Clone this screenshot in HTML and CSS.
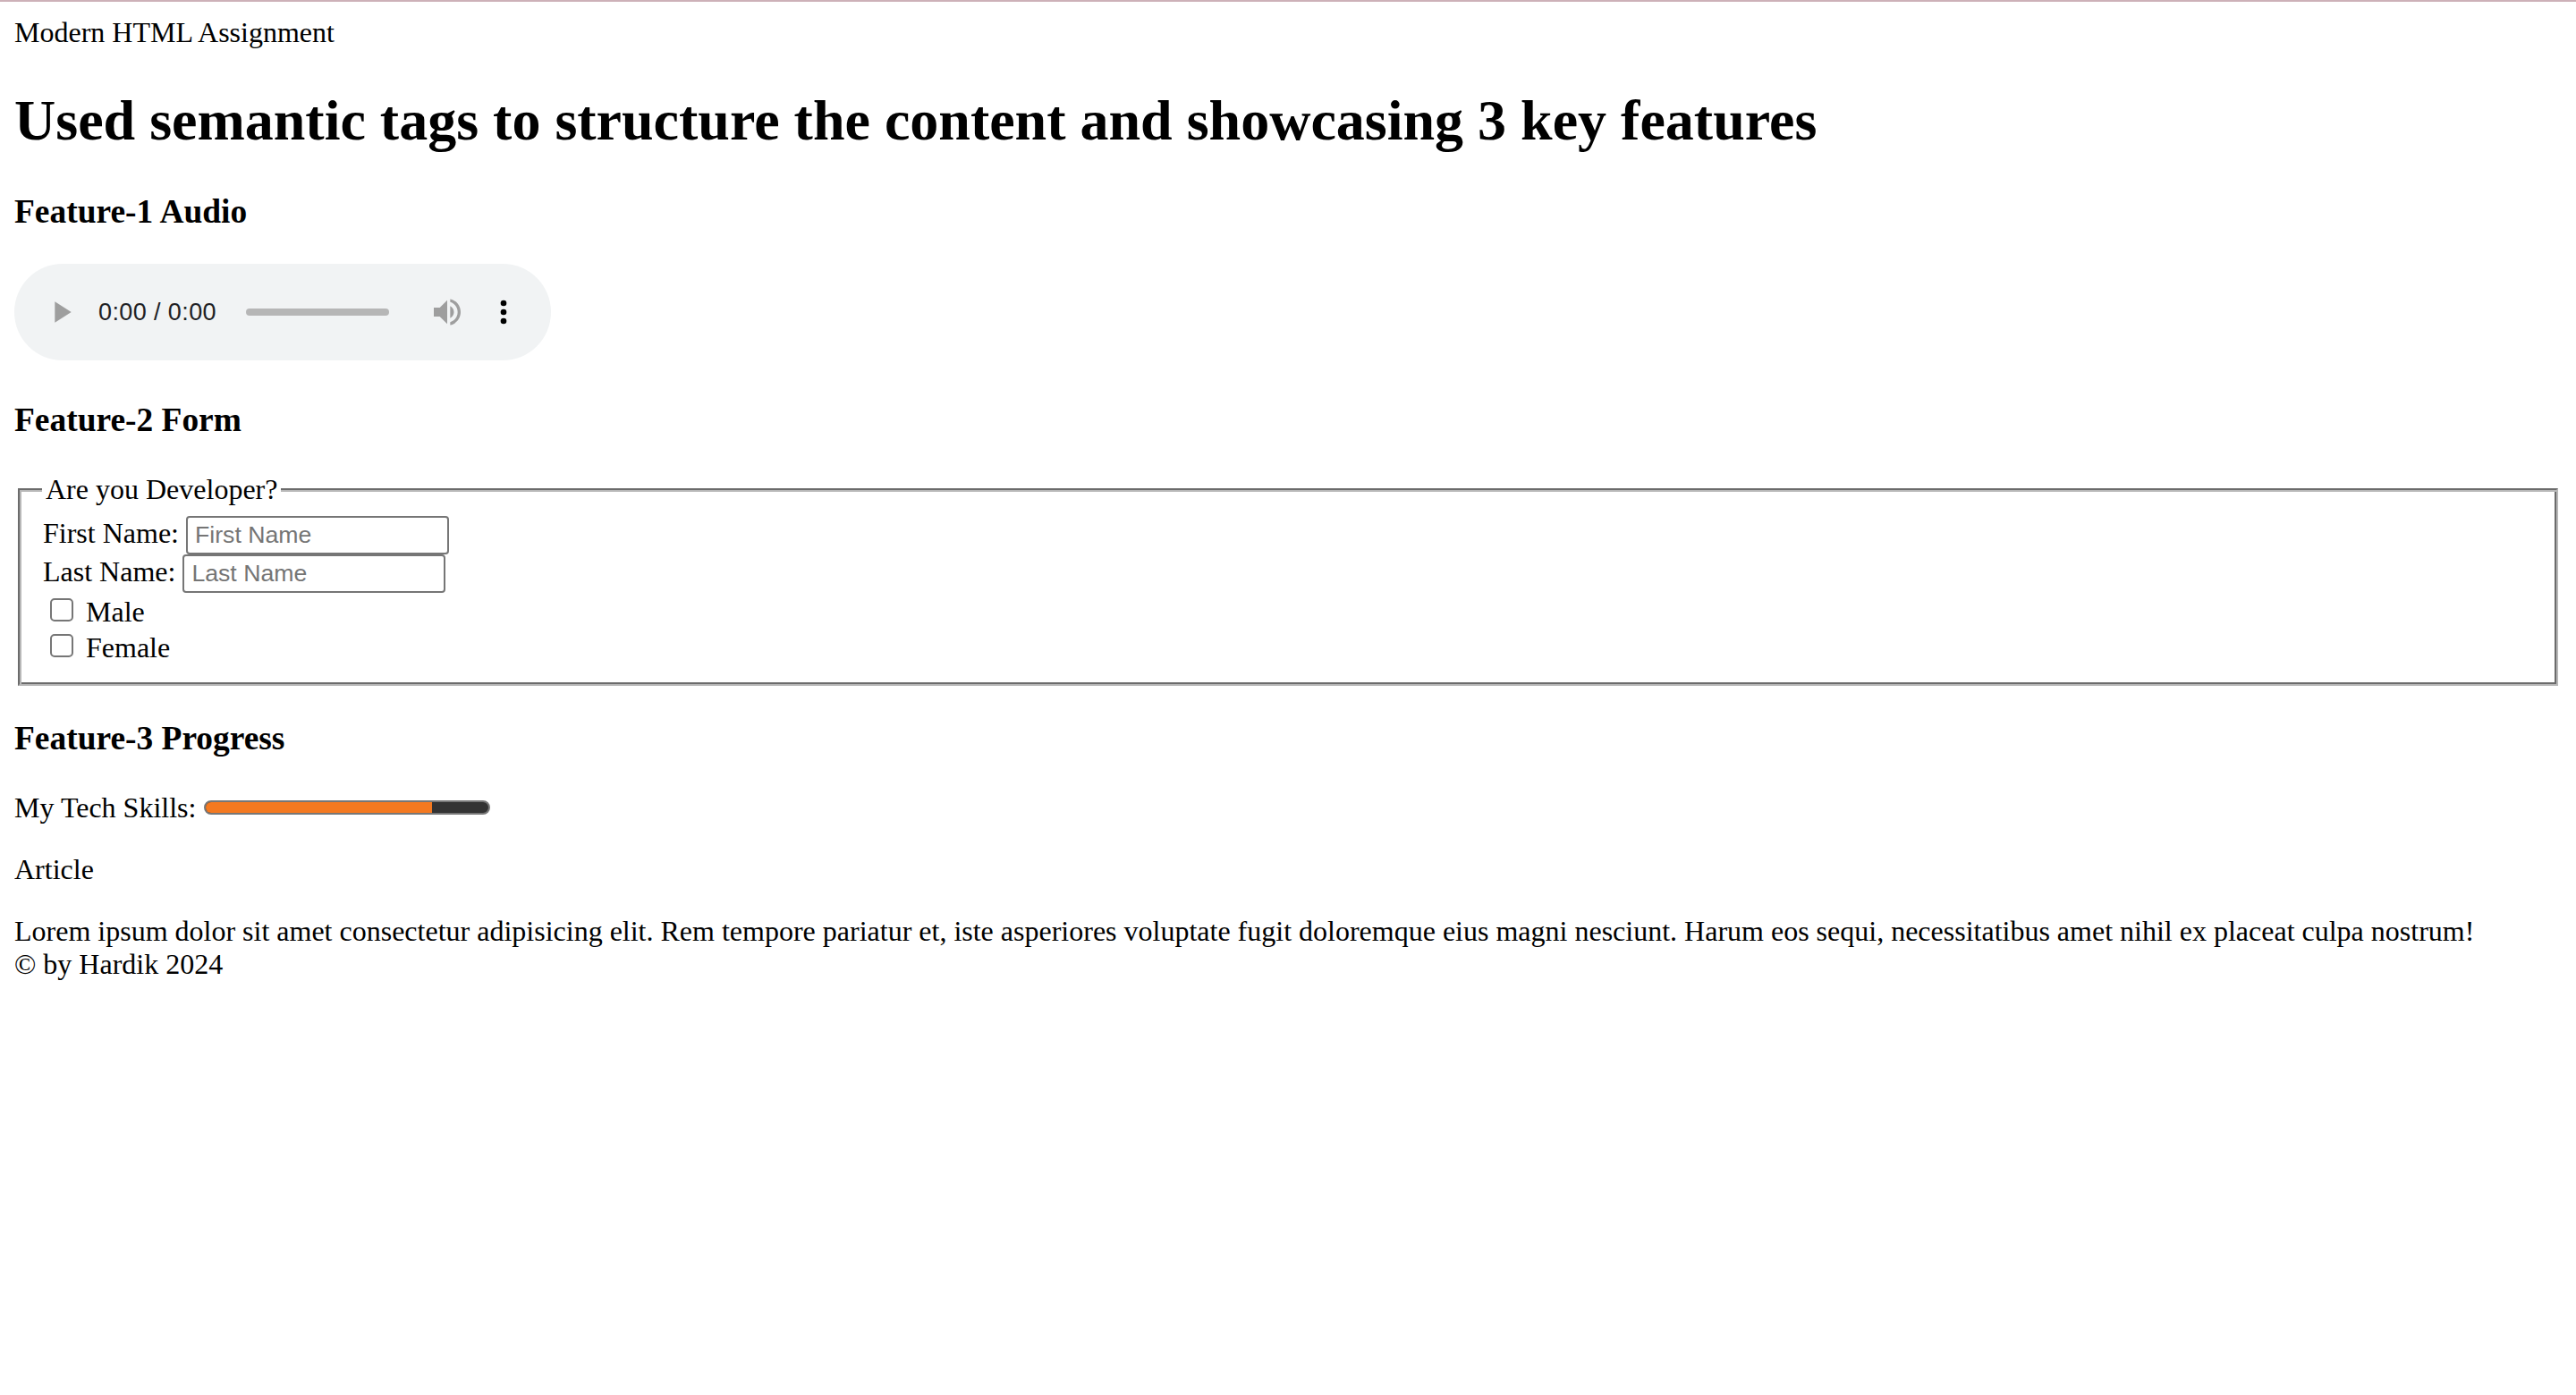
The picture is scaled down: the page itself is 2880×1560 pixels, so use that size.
FILE: index.html
```html
<!DOCTYPE html>
<html lang="en">
<head>
<meta charset="utf-8">
<title>Modern HTML Assignment</title>
<link rel="stylesheet" href="styles.css">
</head>
<body>
<header class="site-header">
  <div class="brand">Modern HTML Assignment</div>
</header>
<main>
  <h1 class="title">Used semantic tags to structure the content and showcasing 3 key features</h1>

  <section class="feature">
    <h3 class="feature-title">Feature-1 Audio</h3>
    <div class="player-line">
      <div class="player">
        <svg class="icon play" viewBox="0 0 24 24" width="40" height="40"><path d="M8 5v14l11-7z"/></svg>
        <span class="time">0:00 / 0:00</span>
        <span class="timeline"></span>
        <svg class="icon volume" viewBox="0 0 24 24" width="40" height="40"><path d="M3 9v6h4l5 5V4L7 9H3zm13.5 3c0-1.770-1.020-3.290-2.500-4.030v8.050c1.480-.730 2.500-2.250 2.500-4.020zM14 3.230v2.060c2.890.860 5 3.540 5 6.710s-2.110 5.850-5 6.710v2.060c4.010-.910 7-4.490 7-8.770s-2.990-7.860-7-8.770z"/></svg>
        <svg class="icon more" viewBox="0 0 24 24" width="40" height="40"><circle cx="12" cy="6" r="2"/><circle cx="12" cy="12" r="2"/><circle cx="12" cy="18" r="2"/></svg>
      </div>
    </div>
  </section>

  <section class="feature">
    <h3 class="feature-title">Feature-2 Form</h3>
    <form class="dev-form">
      <fieldset class="dev-fieldset">
        <legend class="dev-legend">Are you Developer?</legend>
        <div class="field-row"><label for="fname">First Name:</label> <input class="text-input" type="text" id="fname" placeholder="First Name"></div>
        <div class="field-row"><label for="lname">Last Name:</label> <input class="text-input" type="text" id="lname" placeholder="Last Name"></div>
        <div class="check-row"><input class="check" type="checkbox" id="male"><label class="check-label" for="male">Male</label></div>
        <div class="check-row"><input class="check" type="checkbox" id="female"><label class="check-label" for="female">Female</label></div>
      </fieldset>
    </form>
  </section>

  <section class="feature">
    <h3 class="feature-title">Feature-3 Progress</h3>
    <p class="skills"><label>My Tech Skills:</label><span class="progress"><span class="progress-fill" style="width:80%"></span></span></p>
  </section>

  <article class="article">
    <p class="article-title">Article</p>
    <div class="article-body">Lorem ipsum dolor sit amet consectetur adipisicing elit. Rem tempore pariatur et, iste asperiores voluptate fugit doloremque eius magni nesciunt. Harum eos sequi, necessitatibus amet nihil ex placeat culpa nostrum!</div>
  </article>
</main>
<footer class="site-footer">© by Hardik 2024</footer>
</body>
</html>
```

FILE: styles.css
```css
html {
  border-top: 2px solid #cdb1b8;
  background: #fff;
}

body {
  margin: 16px;
  font-family: "Liberation Serif", "Times New Roman", serif;
  font-size: 32px;
  color: #000;
}

.title {
  font-size: 64px;
  font-weight: bold;
  margin: 42.88px 0;
}

.feature-title {
  font-size: 37.44px;
  font-weight: bold;
  margin: 37.44px 0;
}

/* audio player */
.player-line {
  padding-bottom: 7.6px;
}

.player {
  display: flex;
  align-items: center;
  width: 600px;
  height: 108px;
  border-radius: 54px;
  background: #f1f3f4;
}

.icon {
  flex: none;
  display: block;
}

.play {
  fill: #9e9e9e;
  margin-left: 32px;
}

.time {
  flex: none;
  width: 132px;
  margin-left: 22px;
  font-family: "Liberation Sans", Arial, sans-serif;
  font-size: 27px;
  letter-spacing: 0.4px;
  color: #202124;
  white-space: nowrap;
}

.timeline {
  flex: none;
  width: 160px;
  height: 8px;
  margin-left: 33px;
  border-radius: 4px;
  background: #b6b6b6;
}

.volume {
  fill: #9e9e9e;
  margin-left: 45px;
}

.more {
  fill: #000;
  margin-left: 23px;
}

/* form */
.dev-form {
  margin: 0 0 32px;
}

.dev-fieldset {
  margin: 0 4px;
  padding: 11.2px 26px 22px;
  border: 2px solid;
  border-color: #6b6b6b #b8b8b8 #b8b8b8 #6b6b6b;
  box-shadow: inset 2px 2px 0 #b8b8b8, inset -2px -2px 0 #6b6b6b;
}

.dev-legend {
  padding: 0 4px;
  margin-left: -1px;
  background: #fff;
}

.text-input {
  box-sizing: border-box;
  width: 294px;
  padding: 4px 8px;
  border: 2px solid #767676;
  border-radius: 4px;
  font-family: "Liberation Sans", Arial, sans-serif;
  font-size: 26.67px;
  color: #000;
  background: #fff;
}

.text-input::placeholder {
  color: #757575;
}

.check-row {
  display: flex;
  align-items: flex-start;
  height: 40px;
}

.check {
  -webkit-appearance: none;
  appearance: none;
  flex: none;
  width: 26px;
  height: 26px;
  margin: 6px 6px 0 8px;
  border: 2px solid #767676;
  border-radius: 5px;
  background: #fff;
}

.check-label {
  margin-top: 3px;
  margin-left: 8px;
  line-height: 36.8px;
}

/* progress */
.skills {
  margin: 32px 0;
}

.progress {
  display: inline-block;
  box-sizing: border-box;
  width: 320px;
  height: 16px;
  margin-left: 9px;
  vertical-align: 3px;
  border: 2px solid #777;
  border-radius: 8px;
  background: #333;
  overflow: hidden;
}

.progress-fill {
  display: block;
  height: 100%;
  background: #f47920;
}

.article-title {
  margin: 32px 0;
}
```
